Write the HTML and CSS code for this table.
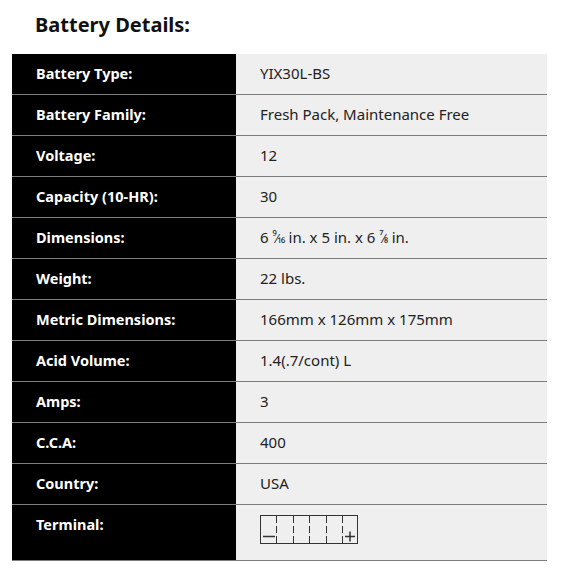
FILE: index.html
```html
<!DOCTYPE html>
<html>
<head>
<meta charset="utf-8">
<link rel="stylesheet" href="styles.css">
</head>
<body>
<div class="page">
  <h2 class="title">Battery Details:</h2>
  <div class="specs">
    <div class="row"><div class="label">Battery Type:</div><div class="value">YIX30L-BS</div></div>
    <div class="row"><div class="label">Battery Family:</div><div class="value">Fresh Pack, Maintenance Free</div></div>
    <div class="row"><div class="label">Voltage:</div><div class="value">12</div></div>
    <div class="row"><div class="label">Capacity (10-HR):</div><div class="value">30</div></div>
    <div class="row"><div class="label">Dimensions:</div><div class="value">6 <span class="frac"><span class="num">9</span>⁄<span class="den">16</span></span> in. x 5 in. x 6 <span class="frac"><span class="num">7</span>⁄<span class="den">8</span></span> in.</div></div>
    <div class="row"><div class="label">Weight:</div><div class="value">22 lbs.</div></div>
    <div class="row"><div class="label">Metric Dimensions:</div><div class="value">166mm x 126mm x 175mm</div></div>
    <div class="row"><div class="label">Acid Volume:</div><div class="value">1.4(.7/cont) L</div></div>
    <div class="row"><div class="label">Amps:</div><div class="value">3</div></div>
    <div class="row"><div class="label">C.C.A:</div><div class="value">400</div></div>
    <div class="row"><div class="label">Country:</div><div class="value">USA</div></div>
    <div class="row row-tall"><div class="label">Terminal:</div><div class="value">
      <svg class="terminal" width="100" height="31" viewBox="0 0 100 31">
        <rect x="0.5" y="0.5" width="97" height="28" fill="none" stroke="#333" stroke-width="1"/>
        <g stroke="#333" stroke-width="1" stroke-dasharray="7 3">
          <line x1="16.5" y1="1" x2="16.5" y2="29"/>
          <line x1="33.5" y1="1" x2="33.5" y2="29"/>
          <line x1="49.5" y1="1" x2="49.5" y2="29"/>
          <line x1="66.5" y1="1" x2="66.5" y2="29"/>
          <line x1="82.5" y1="1" x2="82.5" y2="29"/>
        </g>
        <line x1="3" y1="21.5" x2="15" y2="21.5" stroke="#333" stroke-width="1.5"/>
        <line x1="85" y1="21.5" x2="95" y2="21.5" stroke="#333" stroke-width="1.5"/>
        <line x1="90" y1="16.5" x2="90" y2="26.5" stroke="#333" stroke-width="1.5"/>
      </svg>
    </div></div>
  </div>
</div>
</body>
</html>
```
FILE: styles.css
```css
html, body {
  margin: 0;
  padding: 0;
  background: #fff;
}
body {
  font-family: "Noto Sans", "Open Sans", sans-serif;
  color: #222;
}
.page {
  padding: 0 21px 0 12px;
}
.title {
  margin: 0;
  padding: 11px 0 0 23px;
  height: 54px;
  box-sizing: border-box;
  font-size: 20px;
  font-weight: 700;
  line-height: 28px;
  color: #111;
}
.specs {
  width: 535px;
}
.row {
  display: flex;
  height: 41px;
  box-sizing: border-box;
  border-bottom: 1px solid #7d7d7d;
}
.row-tall {
  height: 56px;
}
.label {
  width: 224px;
  flex: none;
  background: #000;
  color: #fff;
  font-weight: 700;
  font-size: 14.5px;
  line-height: 20px;
  padding: 9px 0 0 24px;
  box-sizing: border-box;
}
.value {
  flex: 1;
  background: #efefef;
  font-size: 15px;
  line-height: 20px;
  padding: 9px 0 0 24px;
  box-sizing: border-box;
  color: #222;
}
.frac {
  font-size: 12px;
  letter-spacing: -0.5px;
}
.frac .num {
  position: relative;
  top: -4px;
}
.row-tall .value {
  padding-top: 10px;
}
.terminal {
  display: block;
}
```
